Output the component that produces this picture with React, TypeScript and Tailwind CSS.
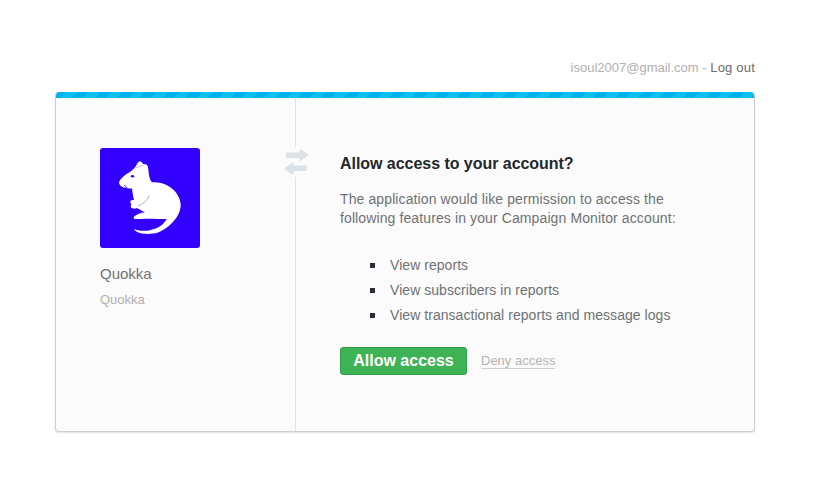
import React from "react";

const permissions = [
  "View reports",
  "View subscribers in reports",
  "View transactional reports and message logs",
];

const QuokkaLogo = () => (
  <svg viewBox="0 0 100 100" className="w-[100px] h-[100px]">
    <path
      fill="#fff"
      d="M19 34C21 30 25 26.5 30 24C33 21.5 35 19.5 36 18C37 16 38 14 39.5 13.3C41 13.5 42.5 14.5 43 16C45 15.8 47.5 16.5 47.8 18.5C48.5 21 48.5 24 49 27C49.5 30 50.5 33 52 34.3C58 34 64 35 70 39C76 43 80.5 50 80.7 57C80.5 64 77 70 72 75C68 79 63 82.5 58 84.5C53 86 47 86.3 42 85.5C38.5 85 36 83.5 34 81.8C34.5 81 36 81.7 38 82.3C43 83.3 49 83 54 81C59 79.5 63 77 66.7 71C60 71 50 70.5 44 70.7C40 71 37 71.3 34.5 71C33 70 33.8 68.5 35.5 67.5C38 65.5 41 64.5 44.5 64.3C42 62.5 39 61.5 37 60C35.5 61 33 60.5 31.5 60C30.5 59 30.5 57.5 31.5 56C30 55.5 30 53.5 31 52.5C32 52 33 52 34 52.2C33 48 32.5 44 32 40.5C29 40.5 26.5 40 24 39.5C21.5 39 19 37 19 34Z"
    />
    <ellipse cx="32.5" cy="28.3" rx="1.7" ry="1.3" fill="#3300ff" />
    <path d="M36 20C38.5 18.5 41 17.8 43.5 17.5" stroke="#3300ff" strokeOpacity="0.35" strokeWidth="0.8" fill="none" />
    <path d="M38 58C43 56 47 53 49 47.5" stroke="#3300ff" strokeOpacity="0.45" strokeWidth="0.8" fill="none" />
    <path d="M24 37C25.5 38 26.5 39 27 40" stroke="#3300ff" strokeWidth="0.8" fill="none" />
    <path d="M36 66.5C39 65.5 42 65 44.5 64.5" stroke="#3300ff" strokeOpacity="0.5" strokeWidth="0.7" fill="none" />
  </svg>
);

const SwapArrows = () => (
  <svg viewBox="0 0 26 28" className="w-[26px] h-[28px]">
    <path fill="#dde2e6" d="M3 4.5H16.5V0.5L26 7L16.5 13.5V10H3Z" />
    <path fill="#dde2e6" d="M24 17.5H10.5V14L1 20.5L10.5 27.5V23H24Z" />
  </svg>
);

export default function App() {
  return (
    <div className="min-h-[497px] bg-white pt-[60px] font-['Liberation_Sans',Arial,sans-serif] text-[13px]">
      <div className="w-[700px] ml-[55px]">
        <p className="text-right leading-[15px] text-[#b0b0b0]">
          isoul2007@gmail.com - <a className="text-[#6b6b6b] tracking-[0.2px]">Log out</a>
        </p>

        <div className="mt-[17px] h-[340px] rounded-[4px] bg-[#fbfbfb] border-x border-b border-[#cfcfcf] shadow-[0_1px_2px_rgba(0,0,0,0.12)] flex flex-col overflow-hidden">
          <div className="h-[6px] -mx-px shrink-0 bg-[repeating-linear-gradient(135deg,#00b1ee_0px,#00b1ee_8px,#0cc0f0_8px,#0cc0f0_16px)]" />

          <div className="flex flex-1">
            <div className="relative w-[240px] shrink-0 border-r border-[#e2e2e2] pl-[44px] pt-[50px]">
              <div className="w-[100px] h-[100px] rounded-[3px] bg-[#3300ff] overflow-hidden">
                <QuokkaLogo />
              </div>
              <h2 className="mt-[17px] text-[15px] leading-[18px] text-[#727272]">Quokka</h2>
              <p className="mt-[9px] leading-[16px] text-[#b0b0b0]">Quokka</p>

              <div className="absolute top-[49px] -right-[14px] bg-[#fbfbfb] py-px">
                <SwapArrows />
              </div>
            </div>

            <div className="flex-1 pl-[44px] pt-[56px]">
              <h1 className="text-[16px] leading-[20px] font-bold text-[#23282d] tracking-[-0.04px]">
                Allow access to your account?
              </h1>
              <p className="mt-[16px] w-[350px] text-[14px] leading-[19px] text-[#6f7275] tracking-[0.11px]">
                The application would like permission to access the following features in your Campaign Monitor account:
              </p>

              <ul className="mt-[27px] flex flex-col gap-[5px] text-[14px] leading-[20px] text-[#6f7275] tracking-[0.05px]">
                {permissions.map((item) => (
                  <li key={item} className="flex items-center pl-[30px]">
                    <span className="w-[5px] h-[5px] bg-[#2b3038] mr-[15px] shrink-0" />
                    {item}
                  </li>
                ))}
              </ul>

              <div className="mt-[22px] flex items-center">
                <button className="w-[127px] h-[28px] rounded-[3px] border border-[#2f9e4d] bg-[#3eb356] text-white text-[16px] font-bold leading-none">
                  Allow access
                </button>
                <a className="ml-[14px] text-[#b4b4b4] leading-[15px] border-b border-[#cfcfcf]">Deny access</a>
              </div>
            </div>
          </div>
        </div>
      </div>
    </div>
  );
}
